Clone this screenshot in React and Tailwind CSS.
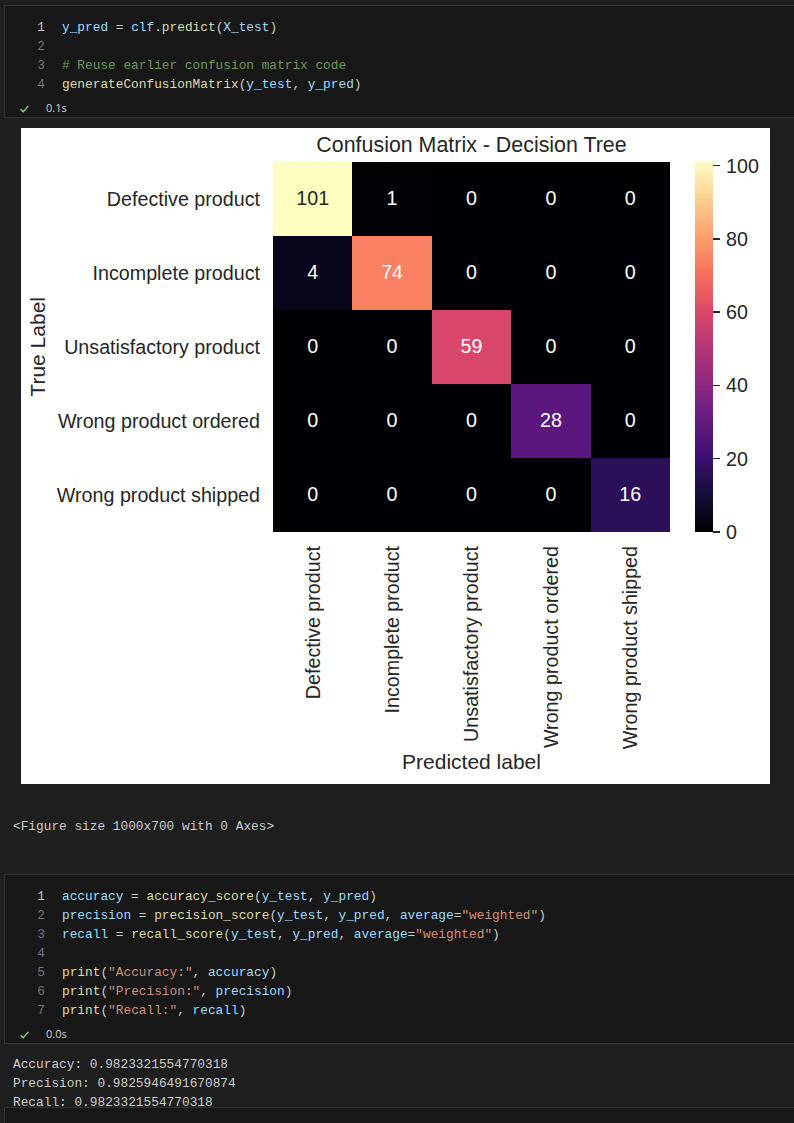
import React from "react";

const V = ({ children }) => <span className="text-[#9cdcfe]">{children}</span>;
const F = ({ children }) => <span className="text-[#dcdcaa]">{children}</span>;
const S = ({ children }) => <span className="text-[#ce9178]">{children}</span>;
const C = ({ children }) => <span className="text-[#6a9955]">{children}</span>;

function Line({ n, active, children }) {
  return (
    <div className="flex h-[19px] items-center whitespace-pre">
      <div className={"w-[40px] text-right " + (active ? "text-[#c6c6c6]" : "text-[#6e7681]")}>{n}</div>
      <div className="ml-[17px] text-[#cccccc]">{children}</div>
    </div>
  );
}

function Status({ time }) {
  return (
    <div className="mt-[6px] flex h-[17px] items-center pl-[15px]">
      <svg width="9" height="8" viewBox="0 0 9 8" className="block">
        <path d="M0.6 4.2 L3.2 6.8 L8.4 0.9" fill="none" stroke="#89d185" strokeWidth="1.3" />
      </svg>
      <span className="ml-[17px] font-['Open_Sans',sans-serif] text-[11px] text-[#cccccc]">{time}</span>
    </div>
  );
}

function Cell({ children, time }) {
  return (
    <div className="ml-[4px] shrink-0 border-y border-l border-[#333333] bg-[#181818] pt-[12px] font-['Liberation_Mono','DejaVu_Sans_Mono',monospace] text-[12.8px]">
      {children}
      <Status time={time} />
    </div>
  );
}

const data = [
  [101, 1, 0, 0, 0],
  [4, 74, 0, 0, 0],
  [0, 0, 59, 0, 0],
  [0, 0, 0, 28, 0],
  [0, 0, 0, 0, 16],
];

const cellClass = {
  101: "bg-[#fcfdbf] text-[#262626]",
  74: "bg-[#f98062] text-white",
  59: "bg-[#d8466b] text-white",
  28: "bg-[#5b177d] text-white",
  16: "bg-[#2b0f58] text-white",
  4: "bg-[#06051a] text-white",
  1: "bg-[#010106] text-white",
  0: "bg-[#000004] text-white",
};

const labels = [
  "Defective product",
  "Incomplete product",
  "Unsatisfactory product",
  "Wrong product ordered",
  "Wrong product shipped",
];

const ticks = ["100", "80", "60", "40", "20", "0"];

function Figure() {
  return (
    <div className="ml-[21px] mt-[10px] h-[656px] w-[749px] shrink-0 bg-white font-['Liberation_Sans',Arial,sans-serif] text-[#262626]">
      <div className="flex h-[34px]">
        <div className="w-[252px]" />
        <div className="w-[397px] whitespace-nowrap text-center text-[21.4px] leading-[34px]">
          Confusion Matrix - Decision Tree
        </div>
      </div>
      <div className="flex h-[370px]">
        <div className="flex w-[34px] items-center justify-center">
          <span className="rotate-180 whitespace-nowrap text-[21px] leading-[24px] [writing-mode:vertical-rl]">True Label</span>
        </div>
        <div className="mr-[13px] flex w-[205px] flex-col">
          {labels.map((l) => (
            <div key={l} className="flex flex-1 items-center justify-end whitespace-nowrap text-[19.7px] leading-[24px]">
              {l}
            </div>
          ))}
        </div>
        <div className="grid w-[397px] grid-cols-5 grid-rows-5">
          {data.flat().map((v, i) => (
            <div key={i} className={"flex items-center justify-center text-[19.7px] " + cellClass[v]}>
              {v}
            </div>
          ))}
        </div>
        <div className="ml-[25px] w-[18px] bg-[linear-gradient(to_top,#000004,#140e36_10%,#3b0f70_20%,#641a80_30%,#8c2981_40%,#b73779_50%,#de4968_60%,#f7705c_70%,#fe9f6d_80%,#fecf92_90%,#fcfdbf)]" />
        <div className="flex flex-col justify-between pt-[3.7px]">
          {ticks.map((t) => (
            <div key={t} className="flex h-0 items-center">
              <div className="h-[1.6px] w-[7px] bg-[#262626]" />
              <span className="ml-[6px] text-[19.7px] leading-[24px]">{t}</span>
            </div>
          ))}
        </div>
      </div>
      <div className="mt-[14px] flex h-[204px]">
        <div className="w-[252px]" />
        <div className="grid w-[397px] grid-cols-5">
          {labels.map((l) => (
            <div key={l} className="flex items-start justify-center">
              <span className="rotate-180 whitespace-nowrap text-[19.7px] leading-[24px] [writing-mode:vertical-rl]">{l}</span>
            </div>
          ))}
        </div>
      </div>
      <div className="flex h-[24px]">
        <div className="w-[252px]" />
        <div className="w-[397px] whitespace-nowrap text-center text-[21px] leading-[24px]">Predicted label</div>
      </div>
    </div>
  );
}

export default function App() {
  return (
    <div className="flex h-[1123px] w-[794px] flex-col overflow-hidden bg-[#1f1f1f] pt-[5px]">
      <Cell time="0.1s">
        <Line n={1} active>
          <V>y_pred</V> = <V>clf</V>.<F>predict</F>(<V>X_test</V>)
        </Line>
        <Line n={2}>{""}</Line>
        <Line n={3}>
          <C># Reuse earlier confusion matrix code</C>
        </Line>
        <Line n={4}>
          <F>generateConfusionMatrix</F>(<V>y_test</V>, <V>y_pred</V>)
        </Line>
      </Cell>

      <Figure />

      <div className="mt-[33px] h-[19px] shrink-0 whitespace-pre pl-[13px] font-['Liberation_Mono','DejaVu_Sans_Mono',monospace] text-[12.8px] leading-[19px] text-[#cccccc]">
        {"<Figure size 1000x700 with 0 Axes>"}
      </div>

      <div className="mt-[38px] flex shrink-0 flex-col">
        <Cell time="0.0s">
          <Line n={1} active>
            <V>accuracy</V> = <F>accuracy_score</F>(<V>y_test</V>, <V>y_pred</V>)
          </Line>
          <Line n={2}>
            <V>precision</V> = <F>precision_score</F>(<V>y_test</V>, <V>y_pred</V>, <V>average</V>=<S>"weighted"</S>)
          </Line>
          <Line n={3}>
            <V>recall</V> = <F>recall_score</F>(<V>y_test</V>, <V>y_pred</V>, <V>average</V>=<S>"weighted"</S>)
          </Line>
          <Line n={4}>{""}</Line>
          <Line n={5}>
            <F>print</F>(<S>"Accuracy:"</S>, <V>accuracy</V>)
          </Line>
          <Line n={6}>
            <F>print</F>(<S>"Precision:"</S>, <V>precision</V>)
          </Line>
          <Line n={7}>
            <F>print</F>(<S>"Recall:"</S>, <V>recall</V>)
          </Line>
        </Cell>
      </div>

      <div className="h-[63px] shrink-0 whitespace-pre pl-[13px] pt-[11px] font-['Liberation_Mono','DejaVu_Sans_Mono',monospace] text-[12.8px] leading-[19px] text-[#cccccc]">
        <div>Accuracy: 0.9823321554770318</div>
        <div>Precision: 0.9825946491670874</div>
        <div>Recall: 0.9823321554770318</div>
      </div>

      <div className="ml-[4px] h-[40px] shrink-0 border-l border-t border-[#333333] bg-[#181818]" />
    </div>
  );
}
